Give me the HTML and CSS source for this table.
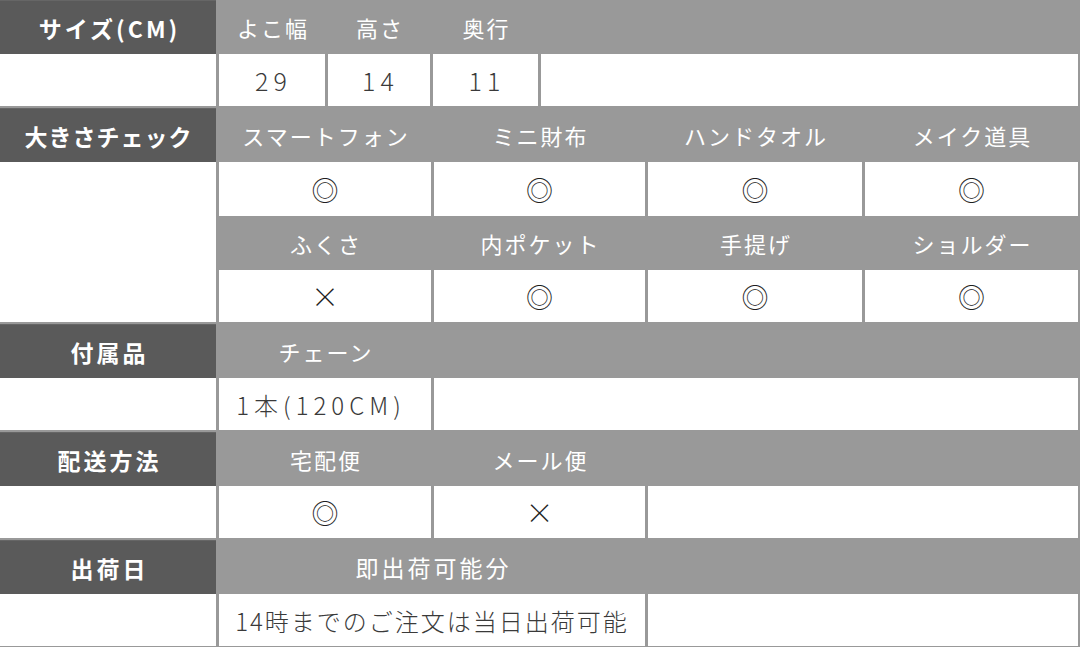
FILE: index.html
```html
<!DOCTYPE html>
<html lang="ja">
<head>
<meta charset="utf-8">
<link rel="stylesheet" href="styles.css">
</head>
<body>
<div class="sheet">
  <section class="sec sec-size">
    <div class="label">サイズ(CM)</div>
    <div class="head">よこ幅</div>
    <div class="head">高さ</div>
    <div class="head">奥行</div>
    <div class="head"></div>
    <div class="cell"></div>
    <div class="cell num">29</div>
    <div class="cell num">14</div>
    <div class="cell num">11</div>
    <div class="cell"></div>
  </section>

  <section class="sec sec-check">
    <div class="label label-long">大きさチェック</div>
    <div class="head">スマートフォン</div>
    <div class="head">ミニ財布</div>
    <div class="head">ハンドタオル</div>
    <div class="head">メイク道具</div>
    <div class="cell tall"></div>
    <div class="cell mark">◎</div>
    <div class="cell mark">◎</div>
    <div class="cell mark">◎</div>
    <div class="cell mark">◎</div>
    <div class="head">ふくさ</div>
    <div class="head">内ポケット</div>
    <div class="head">手提げ</div>
    <div class="head">ショルダー</div>
    <div class="cell mark cross">×</div>
    <div class="cell mark">◎</div>
    <div class="cell mark">◎</div>
    <div class="cell mark">◎</div>
  </section>

  <section class="sec sec-acc">
    <div class="label">付属品</div>
    <div class="head">チェーン</div>
    <div class="head"></div>
    <div class="cell"></div>
    <div class="cell wide-text">1本(120CM)</div>
    <div class="cell"></div>
  </section>

  <section class="sec sec-ship">
    <div class="label">配送方法</div>
    <div class="head">宅配便</div>
    <div class="head">メール便</div>
    <div class="head"></div>
    <div class="cell"></div>
    <div class="cell mark">◎</div>
    <div class="cell mark cross">×</div>
    <div class="cell"></div>
  </section>

  <section class="sec sec-date">
    <div class="label">出荷日</div>
    <div class="head wide">即出荷可能分</div>
    <div class="head"></div>
    <div class="cell"></div>
    <div class="cell long-text">14時までのご注文は当日出荷可能</div>
    <div class="cell"></div>
  </section>
</div>
</body>
</html>
```

FILE: styles.css
```css
html, body {
  margin: 0;
  padding: 0;
  background: #999999;
}

.sheet {
  width: 1080px;
  height: 647px;
  overflow: hidden;
  background: #999999;
  font-family: "Noto Sans CJK JP", "Noto Sans", sans-serif;
}

.sec {
  display: grid;
  column-gap: 3px;
  padding-right: 2px;
  margin-bottom: 2px;
  grid-template-rows: 54px 52px;
}

.sec-size { grid-template-columns: 216px 106px 102px 105px 537px; }
.sec-check {
  grid-template-columns: 216px 212px 211px 214px 213px;
  grid-template-rows: 54px 54px 54px 52px;
}
.sec-acc { grid-template-columns: 216px 212px 644px; }
.sec-ship { grid-template-columns: 216px 212px 211px 430px; }
.sec-date { grid-template-columns: 216px 426px 430px; }

.label {
  background: #5a5a5a;
  border-top: 1px solid #666666;
  color: #ffffff;
  font-weight: 700;
  font-size: 23px;
  letter-spacing: 3px;
  padding-left: 3px;
  display: flex;
  align-items: center;
  justify-content: center;
}

.label.label-long {
  letter-spacing: 1px;
  padding-left: 1px;
}

.head {
  color: #ffffff;
  font-size: 22px;
  letter-spacing: 2px;
  padding-left: 2px;
  display: flex;
  align-items: center;
  justify-content: center;
}

.head.wide {
  font-size: 23px;
  letter-spacing: 3px;
  padding-left: 3px;
}

.cell {
  background: #ffffff;
  color: #3a3a3a;
  font-size: 24px;
  font-weight: 300;
  letter-spacing: 3px;
  padding-left: 3px;
  display: flex;
  align-items: center;
  justify-content: center;
}

.cell.tall { grid-row: span 3; }

.cell.num {
  font-size: 25px;
  letter-spacing: 5px;
  padding-left: 3px;
}

.cell.wide-text {
  letter-spacing: 5px;
  padding-left: 0;
  padding-right: 8px;
}

.cell.long-text {
  letter-spacing: 2px;
  padding-left: 0;
}

.cell.mark {
  font-size: 27px;
  color: #1e1e1e;
  letter-spacing: 0;
  padding-left: 0;
}

.cell.cross {
  font-size: 28px;
  font-weight: 300;
}
```
